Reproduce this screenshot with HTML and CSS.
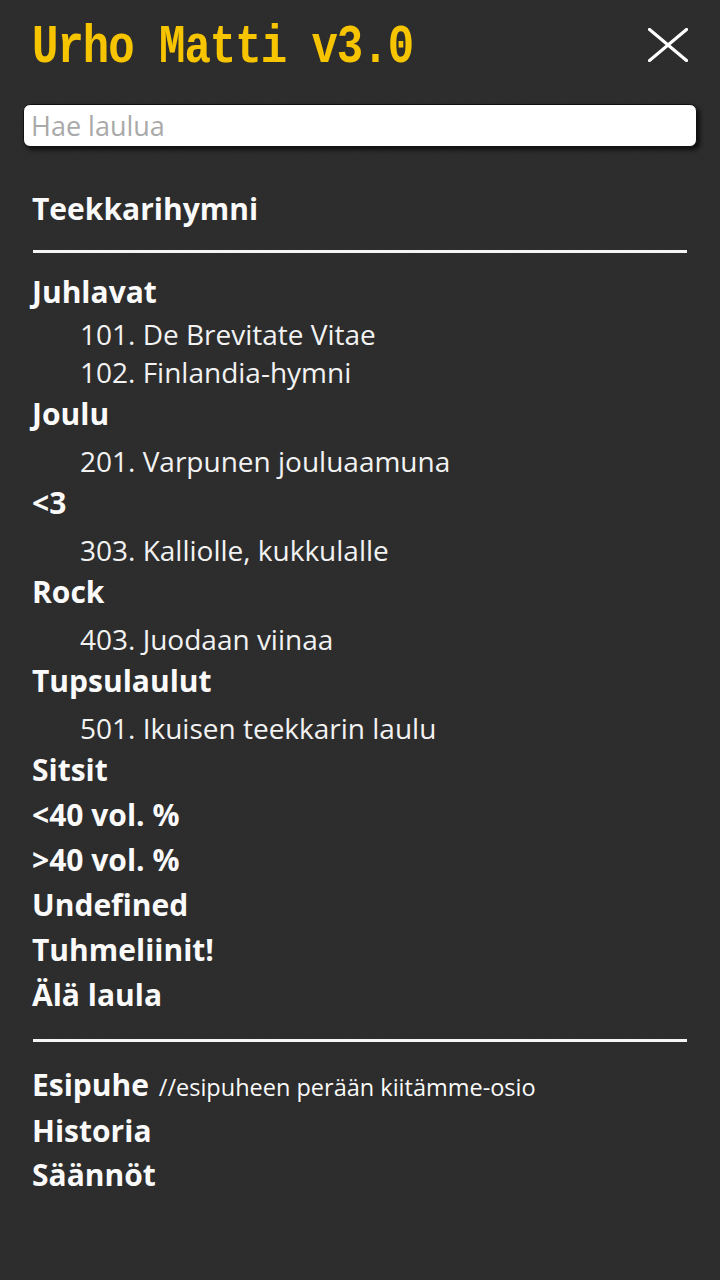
FILE: index.html
```html
<!DOCTYPE html>
<html lang="fi">
<head>
<meta charset="utf-8">
<title>Urho Matti v3.0</title>
<link rel="stylesheet" href="styles.css">
</head>
<body>
<header class="top">
  <h1 class="title"><span class="title-text">Urho Matti v3.0</span></h1>
  <button class="close" aria-label="Sulje">
    <svg width="40" height="34" viewBox="0 0 40 34"><path d="M1.5 1.5 L38.5 32.5 M38.5 1.5 L1.5 32.5" stroke="#fff" stroke-width="3.2" stroke-linecap="square" fill="none"/></svg>
  </button>
</header>
<div class="search"><input class="search-input" type="text" placeholder="Hae laulua"></div>
<nav class="menu">
  <div class="item">Teekkarihymni</div>
  <hr class="rule rule-top">
  <div class="cat cat-first">
    <div class="item">Juhlavat</div>
    <ul class="songs">
      <li>101. De Brevitate Vitae</li>
      <li>102. Finlandia-hymni</li>
    </ul>
  </div>
  <div class="cat">
    <div class="item">Joulu</div>
    <ul class="songs"><li>201. Varpunen jouluaamuna</li></ul>
  </div>
  <div class="cat">
    <div class="item">&lt;3</div>
    <ul class="songs"><li>303. Kalliolle, kukkulalle</li></ul>
  </div>
  <div class="cat">
    <div class="item">Rock</div>
    <ul class="songs"><li>403. Juodaan viinaa</li></ul>
  </div>
  <div class="cat">
    <div class="item">Tupsulaulut</div>
    <ul class="songs"><li>501. Ikuisen teekkarin laulu</li></ul>
  </div>
  <div class="cat"><div class="item">Sitsit</div></div>
  <div class="cat"><div class="item">&lt;40 vol. %</div></div>
  <div class="cat"><div class="item">&gt;40 vol. %</div></div>
  <div class="cat"><div class="item">Undefined</div></div>
  <div class="cat"><div class="item">Tuhmeliinit!</div></div>
  <div class="cat"><div class="item">Älä laula</div></div>
  <hr class="rule rule-bottom">
  <div class="extras">
    <div class="item">Esipuhe <span class="note">//esipuheen perään kiitämme-osio</span></div>
    <div class="item">Historia</div>
    <div class="item">Säännöt</div>
  </div>
</nav>
</body>
</html>
```
FILE: styles.css
```css
html, body {
  margin: 0;
  padding: 0;
}
body {
  width: 720px;
  min-height: 1280px;
  background-color: #2c2c2c;
  background-image: repeating-linear-gradient(45deg, rgba(255,255,255,0.012) 0 1px, transparent 1px 3px);
  font-family: "Open Sans", Lato, sans-serif;
  color: #fafafa;
}
.top {
  display: flex;
  justify-content: space-between;
  align-items: flex-start;
  padding: 28px 32px 0 32px;
}
.title {
  margin: 0;
  font-family: "Liberation Mono", "Courier New", monospace;
  font-weight: bold;
  font-size: 44px;
  line-height: 44px;
  letter-spacing: -1px;
  color: #f7c400;
}
.title-text {
  display: inline-block;
  transform: scaleY(1.2);
  transform-origin: 0 77%;
}
.close {
  margin: 0;
  padding: 0;
  border: 0;
  background: none;
  width: 40px;
  height: 34px;
  display: block;
}
.close svg { display: block; }
.search {
  margin: 32px 23px 0 23px;
}
.search-input {
  display: block;
  box-sizing: border-box;
  width: 100%;
  height: 43px;
  margin: 0;
  padding: 0 7px;
  border: 1px solid #111;
  border-radius: 7px;
  background: #fff;
  box-shadow: 3px 3px 4px rgba(0,0,0,0.65);
  font-family: "Open Sans", Lato, sans-serif;
  font-size: 27px;
  color: #333;
  outline: none;
}
.search-input::placeholder {
  color: #a9a9a9;
}
.menu {
  padding: 39px 32px 0 32px;
}
.item {
  font-weight: bold;
  font-size: 30px;
  line-height: 45px;
  white-space: nowrap;
}
.rule {
  border: 0;
  height: 3px;
  background: #f5f5f5;
  margin: 0 1px;
}
.rule-top {
  margin-top: 19px;
  margin-bottom: 16px;
}
.rule-bottom {
  margin-top: 22px;
  margin-bottom: 21px;
}
.songs {
  list-style: none;
  margin: 0;
  padding: 6px 0 0 48px;
  font-size: 28px;
  line-height: 38px;
  color: #f2f2f2;
}
.cat-first .songs {
  padding-top: 1px;
}
.extras .item {
  line-height: 44px;
}
.note {
  font-weight: normal;
  font-size: 23.5px;
  margin-left: 2px;
}
```
